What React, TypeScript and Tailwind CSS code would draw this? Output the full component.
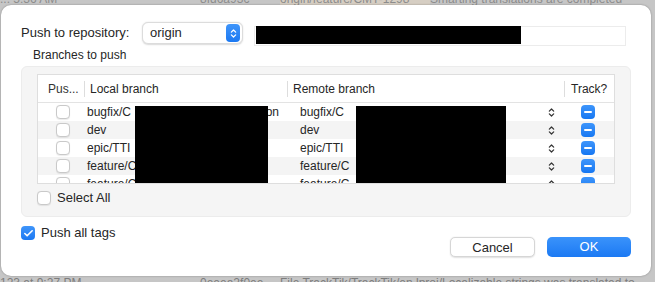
import { Check } from 'lucide-react';

const rows = [
  { local: 'bugfix/C', tail: 'on', remote: 'bugfix/C' },
  { local: 'dev', tail: '', remote: 'dev' },
  { local: 'epic/TTI', tail: '', remote: 'epic/TTI' },
  { local: 'feature/C', tail: '', remote: 'feature/C' },
  { local: 'feature/C', tail: '', remote: 'feature/C' },
];

function UpDown({ className = '' }: { className?: string }) {
  return (
    <svg viewBox="0 0 8 12" className={className} fill="none" stroke="currentColor" strokeWidth="1.4" strokeLinecap="round" strokeLinejoin="round">
      <path d="M1.5 4.5 4 2l2.5 2.5M1.5 7.5 4 10l2.5-2.5" />
    </svg>
  );
}

function TrackIcon() {
  return (
    <div className="w-[14px] h-[14px] rounded-[4px] bg-gradient-to-b from-[#3d95fb] to-[#1577f2] flex items-center justify-center">
      <div className="w-[8px] h-[2px] rounded-full bg-white" />
    </div>
  );
}

function Box() {
  return <div className="w-[14px] h-[14px] rounded-[4px] border border-[#c9c9c9] bg-white shadow-[0_0.5px_1px_rgba(0,0,0,0.08)]" />;
}

export default function App() {
  return (
    <div
      className="w-[655px] h-[282px] bg-[#c6c6c6] flex flex-col overflow-hidden text-[#262626]"
      style={{ fontFamily: '"Liberation Sans", Arial, sans-serif' }}
    >
      <div className="h-[5px] shrink-0 overflow-hidden flex items-end text-[12px] leading-[12px] text-[#8c8c8c]">
        <span className="w-[200px] shrink-0">... 5:36 AM</span>
        <span className="w-[80px] shrink-0">8fd6a93c</span>
        <span className="w-[150px] shrink-0 bg-[#d6cec3]">origin/feature/CMT-1298</span>
        <span className="whitespace-nowrap">Smarting translations are completed</span>
      </div>
      <div className="mx-[1px] w-[650px] h-[271px] shrink-0 bg-white rounded-[10px] shadow-[0_0_2px_rgba(0,0,0,0.35)] flex flex-col px-[20px] pt-[17px]">
        <div className="flex items-center h-[22px]">
          <span className="text-[13px] w-[121px]">Push to repository:</span>
          <div className="w-[101px] h-[22px] rounded-[6px] border border-[#dcdcdc] bg-white shadow-[0_0.5px_1.5px_rgba(0,0,0,0.15)] flex items-center pl-[7px] pr-[2px]">
            <span className="text-[13px] flex-1">origin</span>
            <div className="w-[14px] h-[18px] rounded-[4px] bg-gradient-to-b from-[#3f95fa] to-[#1a78f2] flex items-center justify-center text-white">
              <UpDown className="w-[7px] h-[11px]" />
            </div>
          </div>
          <div className="relative ml-[11px] w-[372px] h-[20px] mt-[5px] border border-[#ececec] bg-white">
            <div className="absolute left-[1px] top-[-1px] w-[265px] h-[18px] bg-black" />
          </div>
        </div>
        <div className="text-[12px] ml-[12px] mt-[3px] leading-[16px]">Branches to push</div>
        <div className="mt-[3px] w-[610px] h-[151px] shrink-0 rounded-[6px] bg-[#f5f5f5] border border-[#ececec] px-[15px] pt-[7px]">
          <div className="relative w-[578px] h-[110px] bg-white border border-[#dedede] overflow-hidden text-[12px]">
            <div className="grid grid-cols-[46px_203px_277px_52px] h-[28px] border-b border-[#e3e3e3] items-center">
              <div className="pl-[10px] text-[#333]">Pus...</div>
              <div className="h-[16px] border-l border-[#dddddd] pl-[5px] leading-[16px]">Local branch</div>
              <div className="h-[16px] border-l border-[#dddddd] pl-[5px] leading-[16px]">Remote branch</div>
              <div className="h-[16px] border-l border-[#dddddd] pl-[6px] leading-[16px]">Track?</div>
            </div>
            {rows.map((r, i) => (
              <div key={i} className={`grid grid-cols-[46px_203px_277px_52px] h-[18px] items-center ${i % 2 === 1 ? 'bg-[#f4f4f4]' : 'bg-white'}`}>
                <div className="pl-[18px]"><Box /></div>
                <div className="pl-[3px] flex justify-between pr-[8px]">
                  <span>{r.local}</span>
                  <span>{r.tail}</span>
                </div>
                <div className="pl-[13px] flex items-center justify-between pr-[9px]">
                  <span>{r.remote}</span>
                  <UpDown className="w-[7px] h-[11px] text-[#333]" />
                </div>
                <div className="pl-[17px]"><TrackIcon /></div>
              </div>
            ))}
            <div className="absolute left-[97px] top-[31px] w-[133px] h-[79px] bg-black" />
            <div className="absolute left-[318px] top-[31px] w-[150px] h-[79px] bg-black" />
          </div>
          <div className="flex items-center gap-[6px] mt-[7px] h-[14px]">
            <Box />
            <span className="text-[13px] leading-[14px]">Select All</span>
          </div>
        </div>
        <div className="flex items-center gap-[6px] mt-[9px] h-[14px]">
          <div className="w-[14px] h-[14px] rounded-[4px] bg-gradient-to-b from-[#3f95fa] to-[#1a78f2] flex items-center justify-center">
            <Check className="w-[11px] h-[11px] text-white" strokeWidth={3.5} />
          </div>
          <span className="text-[13px] leading-[14px]">Push all tags</span>
        </div>
        <div className="flex justify-end gap-[12px] -mt-[3px]">
          <button className="w-[85px] h-[20px] rounded-[5px] bg-white border border-[#d6d6d6] shadow-[0_0.5px_1.5px_rgba(0,0,0,0.12)] text-[13px] text-[#262626]">
            Cancel
          </button>
          <button className="w-[84px] h-[20px] rounded-[5px] bg-gradient-to-b from-[#3a93fb] to-[#1b79f3] text-[13px] text-white">
            OK
          </button>
        </div>
      </div>
      <div className="h-[6px] shrink-0 overflow-hidden flex text-[12px] leading-[14px] text-[#7d7d7d]">
        <span className="w-[200px] shrink-0">123 at 9:27 PM</span>
        <span className="w-[80px] shrink-0">0eeea2f0ee</span>
        <span className="whitespace-nowrap">File TrackTik/TrackTik/en.lproj/Localizable.strings was translated to</span>
      </div>
    </div>
  );
}
